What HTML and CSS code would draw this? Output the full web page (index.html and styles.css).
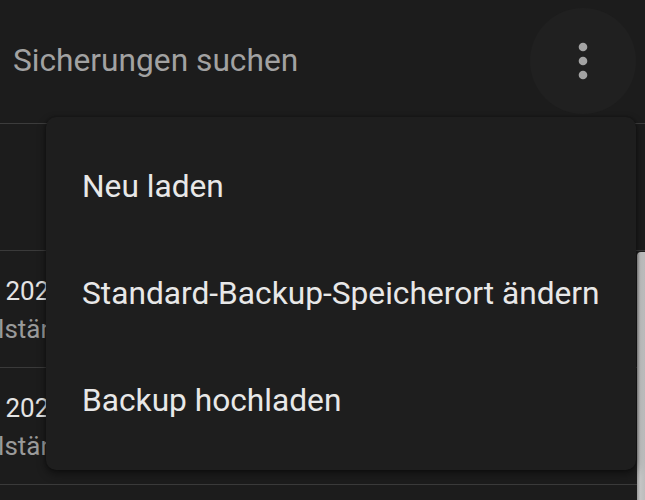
FILE: index.html
```html
<!DOCTYPE html>
<html lang="de">
<head>
<meta charset="utf-8">
<link rel="stylesheet" href="styles.css">
</head>
<body>
<div class="app">
  <header class="topbar">
    <div class="search">Sicherungen suchen</div>
    <button class="more" aria-label="Mehr">
      <svg width="12" height="40" viewBox="0 0 12 40"><circle cx="6" cy="6" r="4.3" fill="#a3a3a3"/><circle cx="6" cy="20" r="4.3" fill="#a3a3a3"/><circle cx="6" cy="34" r="4.3" fill="#a3a3a3"/></svg>
    </button>
  </header>
  <div class="list">
    <div class="row row-head"></div>
    <div class="row">
      <div class="primary">April 2024</div>
      <div class="secondary">Vollständig</div>
    </div>
    <div class="row">
      <div class="primary">April 2024</div>
      <div class="secondary">Vollständig</div>
    </div>
    <div class="row"></div>
  </div>
  <div class="scrollbar"></div>
  <ul class="menu">
    <li class="item">Neu laden</li>
    <li class="item">Standard-Backup-Speicherort ändern</li>
    <li class="item">Backup hochladen</li>
  </ul>
</div>
</body>
</html>
```

FILE: styles.css
```css
html, body {
  margin: 0;
  padding: 0;
  background: #1c1c1c;
  overflow: hidden;
}
body {
  font-family: Roboto, "Noto Sans", sans-serif;
  width: 645px;
  height: 500px;
}
.app {
  position: relative;
  width: 645px;
  height: 500px;
  overflow: hidden;
}
.topbar {
  height: 123px;
  border-bottom: 1px solid #3c3c3c;
  display: flex;
  align-items: flex-start;
  justify-content: space-between;
}
.search {
  margin-left: 13px;
  margin-top: 42px;
  font-size: 31.7px;
  line-height: 38px;
  color: #a2a2a2;
}
.more {
  margin-top: 8px;
  margin-right: 9px;
  width: 106px;
  height: 106px;
  border-radius: 50%;
  border: none;
  background: #202020;
  display: flex;
  align-items: center;
  justify-content: center;
  padding: 0;
}
.list {
  display: flex;
  flex-direction: column;
}
.row {
  height: 117px;
  border-bottom: 1px solid #3a3a3a;
  margin-left: -51px;
  padding-top: 26px;
  box-sizing: border-box;
}
.row-head {
  height: 127px;
}
.primary {
  font-size: 26px;
  line-height: 28px;
  color: #e4e4e4;
  margin-left: -3px;
}
.secondary {
  margin-top: 10px;
  font-size: 26px;
  line-height: 28px;
  color: #9a9a9a;
  margin-left: 12px;
}
.scrollbar {
  position: absolute;
  right: 0;
  top: 252px;
  width: 8px;
  height: 260px;
  background: linear-gradient(to right, #9a9a9a, #c4c4c4 40%, #bcbcbc);
  border-top-left-radius: 4px;
}
.menu {
  position: absolute;
  left: 46px;
  top: 117px;
  width: 590px;
  margin: 0;
  padding: 16px 0;
  list-style: none;
  background: #1e1e1e;
  border-radius: 10px;
  box-shadow: 0 4px 10px rgba(0,0,0,0.45), 0 0 3px rgba(0,0,0,0.4);
  box-sizing: border-box;
}
.item {
  height: 107px;
  display: flex;
  align-items: center;
  padding-left: 36px;
  font-size: 31.7px;
  color: #e8e8e8;
}
```
